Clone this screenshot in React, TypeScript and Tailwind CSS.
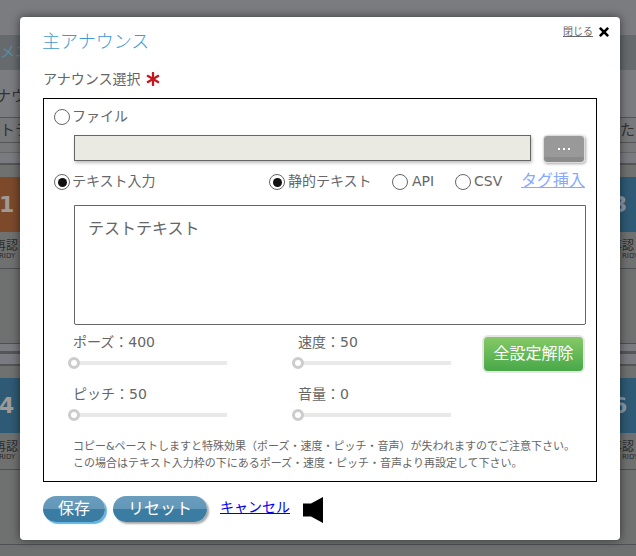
import React from "react";
import { FaAsterisk, FaTimes } from "react-icons/fa";

const Radio = ({ on = false }: { on?: boolean }) => (
  <span className="flex h-4 w-4 shrink-0 items-center justify-center rounded-full border border-[#666] bg-white">
    {on && <span className="h-[9px] w-[9px] rounded-full bg-[#111]" />}
  </span>
);

const Slider = ({ label, nudge = false }: { label: string; nudge?: boolean }) => (
  <div>
    <div className="h-5 text-[14px] leading-5 text-[#666]">{label}</div>
    <div className={`relative mt-[9px] h-1 w-[153px] bg-[#e9e9e9] ${nudge ? "ml-px" : ""}`}>
      <span className="absolute -left-[6px] -top-1 h-3 w-3 rounded-full border-[3px] border-[#ccc] bg-white" />
    </div>
  </div>
);

const TileRow = ({ left, right, color }: { left: string; right: string; color: string }) => (
  <div className="flex h-[167px] justify-between overflow-hidden border-b border-[#4f5052] bg-[#6f7070] font-bold">
    <div className="w-5">
      <div className={`h-[55px] text-[22px] leading-[55px] text-[#a09a96] ${color}`}>
        <span className="-ml-px block">{left}</span>
      </div>
      <div className="flex h-[37px] flex-col border-b border-[#4f5052] pt-[9px] text-[12px] font-normal leading-[11px] text-[#2b2b2b]">
        <span className="-ml-[6px] whitespace-nowrap">再認</span>
        <span className="-ml-[1px] whitespace-nowrap text-[7px] leading-[8px]">RIDY</span>
      </div>
    </div>
    <div className="w-4">
      <div className="h-[55px] bg-[#2f5a75] text-[22px] leading-[55px] text-[#8c9ca8]">
        <span className="-ml-[8px] block">{right}</span>
      </div>
      <div className="flex h-[37px] flex-col border-b border-[#4f5052] pt-[9px] text-[12px] font-normal leading-[11px] text-[#2b2b2b]">
        <span className="-ml-[10px] whitespace-nowrap">再認</span>
        <span className="ml-[2px] whitespace-nowrap text-[7px] leading-[8px]">RIDY</span>
      </div>
    </div>
  </div>
);

export default function App() {
  return (
    <div className="relative h-[556px] w-[636px] overflow-hidden bg-[#7b7c80] font-['DejaVu_Sans','Noto_Sans_CJK_JP',sans-serif] font-normal">
      <div aria-hidden>
        <div className="h-[35px]" />
        <div className="h-[35px] overflow-hidden whitespace-nowrap bg-[#666a6c] text-[15px] leading-[35px] text-[#5a8aa6]">メニュー</div>
        <div className="flex h-[47px] justify-between pt-4 text-[15px] leading-5 text-[#333]">
          <span className="-ml-[4px]">ナウンス</span>
        </div>
        <div className="flex h-[26px] justify-between overflow-hidden border-y border-[#555] bg-[#77787a] text-[15px] leading-6 text-[#333]">
          <span>トテ</span>
          <span className="w-4 whitespace-nowrap">たら</span>
        </div>
        <div className="h-[10px] border-b border-[#666] bg-[#777879]" />
        <div className="h-[12px] border-b-2 border-[#555] bg-[#7a7b80]" />
        <div className="h-[12px] bg-[#6f7070]" />
        <TileRow left="1" right="3" color="bg-[#7c4a2b]" />
        <div className="h-[10px] border-b-[3px] border-[#555] bg-[#7a7b80]" />
        <div className="h-[12px] border-b-2 border-[#555] bg-[#7a7b80]" />
        <div className="h-[12px] bg-[#6f7070]" />
        <TileRow left="4" right="6" color="bg-[#2f5a75]" />
        <div className="h-[48px] bg-[#6f7070]" />
      </div>

      <div className="absolute left-5 top-[17px] h-[523px] w-[600px] rounded-[4px] bg-white px-[23px] shadow-[0_0_10px_rgba(0,0,0,0.55)]">
        <div className="absolute right-[9px] top-[8px] flex items-center gap-[4px]">
          <span className="text-[10px] leading-[14px] text-[#666] underline">閉じる</span>
          <FaTimes className="h-[14px] w-[14px] text-black" />
        </div>

        <h1 className="-ml-px pt-[11px] text-[18px] font-light leading-7 text-[#3f9ad0]">主アナウンス</h1>
        <div className="mt-[13px] flex h-5 items-center text-[14px] leading-5 text-[#666]">
          アナウンス選択
          <FaAsterisk className="ml-[6px] h-[14px] w-[14px] text-[#c4161c]" />
        </div>

        <div className="mt-[9px] h-[384px] w-[554px] border border-black pl-[10px] pt-2">
          <div className="flex h-5 items-center gap-[2px] text-[14px] text-[#666]">
            <Radio />
            <span className="-translate-y-px">ファイル</span>
          </div>
          <div className="mt-2 flex items-start">
            <div className="ml-5 h-[26px] w-[457px] border border-[#666] bg-[#eaeae3] shadow-[1px_2px_3px_rgba(0,0,0,0.25)]" />
            <div className="ml-3 flex h-[28px] w-[42px] items-center justify-center gap-[3px] rounded-[4px] border border-[#dcdcdc] bg-[linear-gradient(#999_0,#999_80%,#8b8b8b_80%)] shadow-[1px_1px_3px_rgba(0,0,0,0.35)]">
              <span className="h-[2px] w-[2px] bg-white" />
              <span className="h-[2px] w-[2px] bg-white" />
              <span className="h-[2px] w-[2px] bg-white" />
            </div>
          </div>
          <div className="mt-[9px] flex h-5 items-center text-[14px] text-[#666]">
            <Radio on />
            <span className="ml-[2px] w-[197px] -translate-y-px">テキスト入力</span>
            <Radio on />
            <span className="ml-[3px] w-[104px] -translate-y-px">静的テキスト</span>
            <Radio />
            <span className="ml-1 w-[43px] -translate-y-px">API</span>
            <Radio />
            <span className="ml-[3px] w-[47px] -translate-y-px">CSV</span>
            <span className="-translate-y-px text-[16px] text-[#8aa8ff] underline">タグ挿入</span>
          </div>
          <div className="ml-5 mt-[13px] h-[120px] w-[512px] rounded-b-[2px] border border-[#666] px-[13px] py-[12px] text-[16px] leading-[22px] text-[#666]">
            テストテキスト
          </div>

          <div className="ml-[19px] mt-[7px] flex items-start">
            <div className="grid grid-cols-[225px_184px] gap-y-[19px]">
              <Slider label="ポーズ：400" nudge />
              <Slider label="速度：50" />
              <Slider label="ピッチ：50" nudge />
              <Slider label="音量：0" />
            </div>
            <div className="mt-[3px] flex h-[38px] w-[103px] items-center justify-center rounded-[6px] border-2 border-[#e6e6e6] bg-[linear-gradient(#86c966,#48a848)] text-[16px] text-white">
              全設定解除
            </div>
          </div>

          <p className="ml-[19px] mt-[21px] whitespace-nowrap text-[11px] leading-[17px] text-[#666]">
            コピー&ペーストしますと特殊効果（ポーズ・速度・ピッチ・音声）が失われますのでご注意下さい。
            <br />
            この場合はテキスト入力枠の下にあるポーズ・速度・ピッチ・音声より再設定して下さい。
          </p>
        </div>

        <div className="mt-[14px] flex items-center">
          <button className="h-[26px] w-[62px] rounded-full bg-[linear-gradient(#6b9dbd_0,#6297b8_50%,#3b7ca3_50%,#3b7ca3_100%)] text-[16px] leading-[22px] text-white shadow-[2px_2px_1px_#62b4e6]">
            保存
          </button>
          <button className="ml-[8px] h-[26px] w-[94px] rounded-full bg-[linear-gradient(#6b9dbd_0,#6297b8_50%,#3b7ca3_50%,#3b7ca3_100%)] text-[16px] leading-[22px] text-white shadow-[2px_2px_2px_#aaa]">
            リセット
          </button>
          <a className="ml-[13px] -mt-[4px] text-[14px] text-[#0000ee] underline">キャンセル</a>
          <svg className="ml-[13px] translate-y-px" width="20" height="26" viewBox="0 0 20 26">
            <path d="M0 6.5H8L20 0V26L8 19.5H0Z" fill="#000" />
          </svg>
        </div>
      </div>
    </div>
  );
}
